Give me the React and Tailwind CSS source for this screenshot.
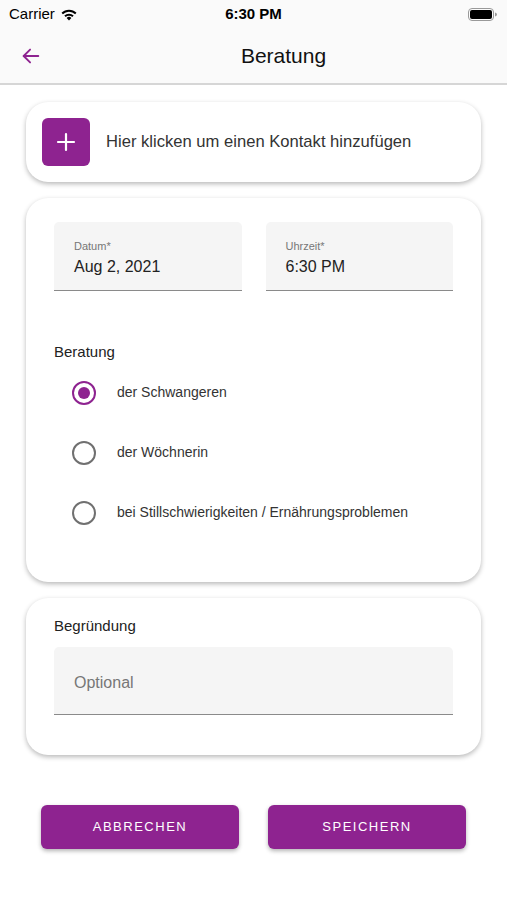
import React, { useState } from "react";

const purple = "#8e2390";

const StatusBar = () => (
  <div className="h-[28px] flex items-center justify-between px-[9px] text-[15px] text-black">
    <div className="flex items-center gap-[5px] w-[120px]">
      <span>Carrier</span>
      <svg width="18" height="13" viewBox="0 0 18 13">
        <path d="M9 12.5 L6.6 9.9 A3.4 3.4 0 0 1 11.4 9.9 Z" fill="#000" />
        <path d="M4.3 7.6 A6.6 6.6 0 0 1 13.7 7.6 L12.3 9.1 A4.6 4.6 0 0 0 5.7 9.1 Z" fill="#000" />
        <path d="M1.5 4.8 A10.6 10.6 0 0 1 16.5 4.8 L15.1 6.3 A8.6 8.6 0 0 0 2.9 6.3 Z" fill="#000" />
      </svg>
    </div>
    <span className="font-semibold">6:30 PM</span>
    <div className="w-[120px] flex justify-end">
      <svg width="30" height="13" viewBox="0 0 30 13">
        <rect x="0.5" y="0.5" width="25" height="12" rx="3.5" fill="none" stroke="#999" />
        <rect x="2" y="2" width="22" height="9" rx="2" fill="#000" />
        <path d="M27 4.5 Q29 5 29 6.5 Q29 8 27 8.5 Z" fill="#999" />
      </svg>
    </div>
  </div>
);

const Card = ({ className, children }) => (
  <div className={`bg-white rounded-[22px] shadow-[0_2px_5px_rgba(0,0,0,0.28)] ${className}`}>
    {children}
  </div>
);

const Field = ({ label, value }) => (
  <div className="flex-1 bg-[#f5f5f5] rounded-t-[5px] border-b border-[#8a8a8a] h-[69px] pl-[20px] pt-[17px]">
    <div className="text-[11px] text-[#777] leading-[14px]">{label}</div>
    <div className="text-[16px] text-[#222] leading-[20px] mt-[4px]">{value}</div>
  </div>
);

const Radio = ({ checked, label, onClick }) => (
  <div className="flex items-center h-[60px] cursor-pointer" onClick={onClick}>
    <div className="w-[59px] flex justify-center">
      {checked ? (
        <div className="w-[24px] h-[24px] rounded-full border-[2px] border-[#8e2390] flex items-center justify-center">
          <div className="w-[12px] h-[12px] rounded-full bg-[#8e2390]" />
        </div>
      ) : (
        <div className="w-[24px] h-[24px] rounded-full border-[2px] border-[#707070]" />
      )}
    </div>
    <span className="ml-[4px] text-[14px] text-[#333]">{label}</span>
  </div>
);

export default function App() {
  const [choice, setChoice] = useState(0);
  const options = [
    "der Schwangeren",
    "der Wöchnerin",
    "bei Stillschwierigkeiten / Ernährungsproblemen",
  ];

  return (
    <div
      className="w-[507px] h-[900px] bg-white overflow-hidden"
      style={{ fontFamily: '"Liberation Sans", Arial, sans-serif' }}
    >
      <div className="bg-[#fafafa]">
        <StatusBar />
        <div className="h-[57px] flex items-center relative border-b-[2px] border-[#d6d6d6]">
          <svg className="ml-[20px]" width="22" height="22" viewBox="0 0 24 24" fill="none" stroke={purple} strokeWidth="2" strokeLinecap="round" strokeLinejoin="round">
            <path d="M20 12H4" />
            <path d="M11 5l-7 7 7 7" />
          </svg>
          <div className="absolute inset-0 pl-[60px] flex items-center justify-center text-[21px] text-[#111] font-medium pointer-events-none">
            Beratung
          </div>
        </div>
      </div>

      <div className="px-[26px] pt-[17px] flex flex-col gap-[16px]">
        <Card className="h-[80px] flex items-center px-[16px]">
          <div className="w-[48px] h-[48px] rounded-[6px] bg-[#8e2390] flex items-center justify-center">
            <svg width="20" height="20" viewBox="0 0 20 20" stroke="#fff" strokeWidth="2.2" strokeLinecap="round">
              <path d="M10 2v16M2 10h16" />
            </svg>
          </div>
          <span className="ml-[16px] text-[16.6px] text-[#333]">Hier klicken um einen Kontakt hinzufügen</span>
        </Card>

        <Card className="h-[384px] px-[28px] pt-[24px]">
          <div className="flex gap-[24px]">
            <Field label="Datum*" value="Aug 2, 2021" />
            <Field label="Uhrzeit*" value="6:30 PM" />
          </div>
          <div className="mt-[50px] text-[15px] text-[#222]">Beratung</div>
          <div className="-mt-[1px]">
            {options.map((o, i) => (
              <Radio key={o} label={o} checked={choice === i} onClick={() => setChoice(i)} />
            ))}
          </div>
        </Card>

        <Card className="h-[157px] px-[28px] pt-[17px]">
          <div className="text-[15px] text-[#222]">Begründung</div>
          <div className="mt-[9px] bg-[#f5f5f5] rounded-t-[5px] border-b border-[#8a8a8a] h-[68px] flex items-center pl-[20px] pt-[5px]">
            <span className="text-[16px] text-[#777]">Optional</span>
          </div>
        </Card>
      </div>

      <div className="flex gap-[29px] px-[41px] mt-[50px]">
        <button className="flex-1 h-[44px] rounded-[6px] bg-[#8e2390] text-white text-[13px] tracking-[1.5px] shadow-[0_2px_4px_rgba(0,0,0,0.3)]">
          ABBRECHEN
        </button>
        <button className="flex-1 h-[44px] rounded-[6px] bg-[#8e2390] text-white text-[13px] tracking-[1.5px] shadow-[0_2px_4px_rgba(0,0,0,0.3)]">
          SPEICHERN
        </button>
      </div>
    </div>
  );
}
